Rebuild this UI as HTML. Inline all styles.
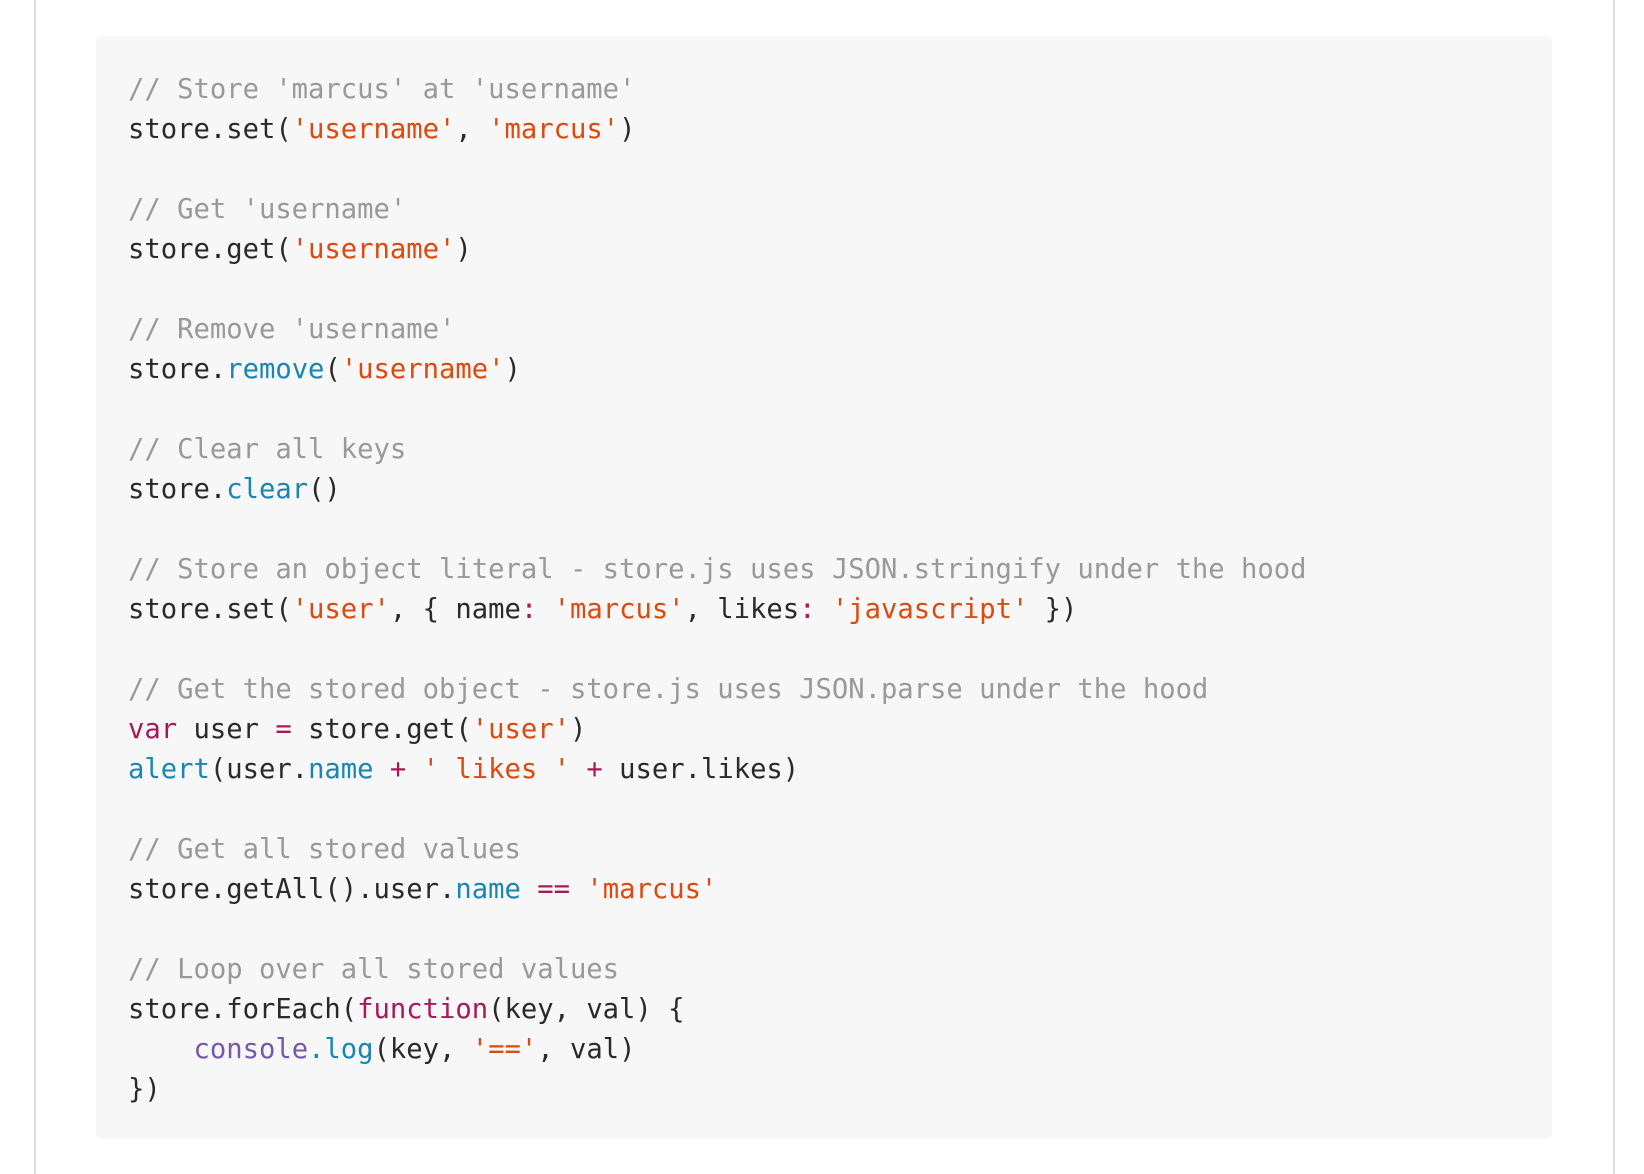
<!DOCTYPE html>
<html><head><meta charset="utf-8"><style>
html,body{margin:0;padding:0;background:#fff;width:1644px;height:1174px;overflow:hidden}
.wrap{position:absolute;left:34px;width:1577px;top:0;height:1174px;border-left:2px solid #ddd;border-right:2px solid #ddd;background:#fff}
pre{position:absolute;left:96px;top:36px;width:1456px;height:1103px;box-sizing:border-box;margin:0;background:#f7f7f7;border-radius:6px;padding:34px 0 0 32px;font-family:"DejaVu Sans Mono","Liberation Mono",monospace;font-size:27.2px;line-height:40px;color:#2a2a2a;white-space:pre}
.c{color:#999}.s{color:#dc4a10}.f{color:#1b86b3}.k{color:#a8195a}.p{color:#7a58a8}
</style></head><body><div class="wrap"></div><pre><span class="c">// Store 'marcus' at 'username'</span>
store.set(<span class="s">'username'</span>, <span class="s">'marcus'</span>)

<span class="c">// Get 'username'</span>
store.get(<span class="s">'username'</span>)

<span class="c">// Remove 'username'</span>
store.<span class="f">remove</span>(<span class="s">'username'</span>)

<span class="c">// Clear all keys</span>
store.<span class="f">clear</span>()

<span class="c">// Store an object literal - store.js uses JSON.stringify under the hood</span>
store.set(<span class="s">'user'</span>, { name<span class="k">:</span> <span class="s">'marcus'</span>, likes<span class="k">:</span> <span class="s">'javascript'</span> })

<span class="c">// Get the stored object - store.js uses JSON.parse under the hood</span>
<span class="k">var</span> user <span class="k">=</span> store.get(<span class="s">'user'</span>)
<span class="f">alert</span>(user.<span class="f">name</span> <span class="k">+</span> <span class="s">' likes '</span> <span class="k">+</span> user.likes)

<span class="c">// Get all stored values</span>
store.getAll().user.<span class="f">name</span> <span class="k">==</span> <span class="s">'marcus'</span>

<span class="c">// Loop over all stored values</span>
store.forEach(<span class="k">function</span>(key, val) {
    <span class="p">console</span><span class="f">.log</span>(key, <span class="s">'=='</span>, val)
})</pre></body></html>
